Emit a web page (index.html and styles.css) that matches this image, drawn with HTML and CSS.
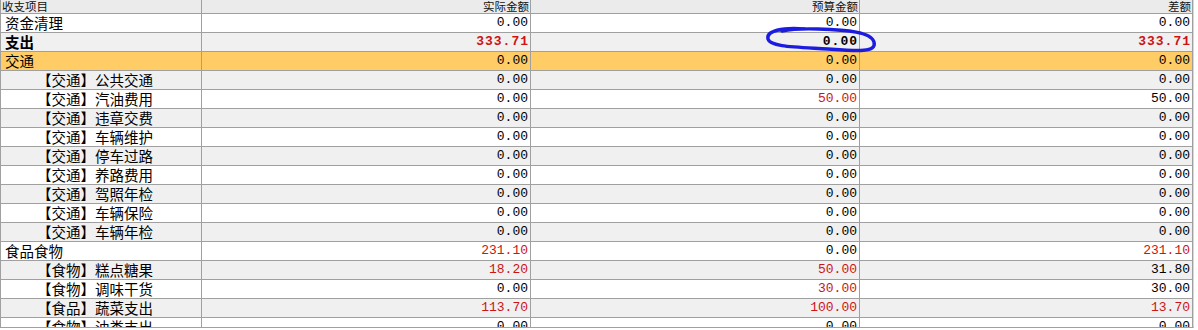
FILE: index.html
```html
<!DOCTYPE html>
<html lang="zh">
<head>
<meta charset="utf-8">
<title>收支</title>
<link rel="stylesheet" href="styles.css">
</head>
<body>
<div class="page">
  <div class="grid">
    <div class="row head">
      <div class="cell label">收支项目</div>
      <div class="cell num">实际金额</div>
      <div class="cell num">预算金额</div>
      <div class="cell num">差额</div>
    </div>
    <div class="row">
      <div class="cell label">资金清理</div>
      <div class="cell num">0.00</div><div class="cell num">0.00</div><div class="cell num">0.00</div>
    </div>
    <div class="row alt bold">
      <div class="cell label">支出</div>
      <div class="cell num red">333.71</div><div class="cell num">0.00</div><div class="cell num red">333.71</div>
    </div>
    <div class="row hl">
      <div class="cell label">交通</div>
      <div class="cell num">0.00</div><div class="cell num">0.00</div><div class="cell num">0.00</div>
    </div>
    <div class="row alt">
      <div class="cell label sub">【交通】公共交通</div>
      <div class="cell num">0.00</div><div class="cell num">0.00</div><div class="cell num">0.00</div>
    </div>
    <div class="row">
      <div class="cell label sub">【交通】汽油费用</div>
      <div class="cell num">0.00</div><div class="cell num red">50.00</div><div class="cell num">50.00</div>
    </div>
    <div class="row alt">
      <div class="cell label sub">【交通】违章交费</div>
      <div class="cell num">0.00</div><div class="cell num">0.00</div><div class="cell num">0.00</div>
    </div>
    <div class="row">
      <div class="cell label sub">【交通】车辆维护</div>
      <div class="cell num">0.00</div><div class="cell num">0.00</div><div class="cell num">0.00</div>
    </div>
    <div class="row alt">
      <div class="cell label sub">【交通】停车过路</div>
      <div class="cell num">0.00</div><div class="cell num">0.00</div><div class="cell num">0.00</div>
    </div>
    <div class="row">
      <div class="cell label sub">【交通】养路费用</div>
      <div class="cell num">0.00</div><div class="cell num">0.00</div><div class="cell num">0.00</div>
    </div>
    <div class="row alt">
      <div class="cell label sub">【交通】驾照年检</div>
      <div class="cell num">0.00</div><div class="cell num">0.00</div><div class="cell num">0.00</div>
    </div>
    <div class="row">
      <div class="cell label sub">【交通】车辆保险</div>
      <div class="cell num">0.00</div><div class="cell num">0.00</div><div class="cell num">0.00</div>
    </div>
    <div class="row alt">
      <div class="cell label sub">【交通】车辆年检</div>
      <div class="cell num">0.00</div><div class="cell num">0.00</div><div class="cell num">0.00</div>
    </div>
    <div class="row">
      <div class="cell label">食品食物</div>
      <div class="cell num red">231.10</div><div class="cell num">0.00</div><div class="cell num red">231.10</div>
    </div>
    <div class="row alt">
      <div class="cell label sub">【食物】糕点糖果</div>
      <div class="cell num red">18.20</div><div class="cell num red">50.00</div><div class="cell num">31.80</div>
    </div>
    <div class="row">
      <div class="cell label sub">【食物】调味干货</div>
      <div class="cell num">0.00</div><div class="cell num red">30.00</div><div class="cell num">30.00</div>
    </div>
    <div class="row alt">
      <div class="cell label sub">【食品】蔬菜支出</div>
      <div class="cell num red">113.70</div><div class="cell num red">100.00</div><div class="cell num red">13.70</div>
    </div>
    <div class="row">
      <div class="cell label sub">【食物】油类支出</div>
      <div class="cell num">0.00</div><div class="cell num">0.00</div><div class="cell num">0.00</div>
    </div>
  </div>
  <svg class="mark" viewBox="0 0 1198 330" width="1198" height="330">
    <path d="M 805 29 C 782 27, 766 31, 768 39 C 770 47, 795 47, 828 49 C 856 51, 877 53, 874 42 C 871 32, 848 30, 818 29 C 803 28.5, 792 29, 782 31" fill="none" stroke="#1c1ce0" stroke-width="3.4" stroke-linecap="round"/>
  </svg>
</div>
</body>
</html>
```

FILE: styles.css
```css
html, body {
  margin: 0;
  padding: 0;
  background: #ffffff;
}
.page {
  position: relative;
  width: 1198px;
  height: 330px;
  overflow: hidden;
}
.grid {
  width: 1194px;
  height: 328px;
  overflow: hidden;
  box-sizing: border-box;
  border-left: 1px solid #a0a0a0;
  border-bottom: 1px solid #a0a0a0;
  border-right: 1px solid #d8d8d8;
}
.row {
  display: grid;
  grid-template-columns: 201px 329px 329px 333px;
  height: 19px;
  box-sizing: border-box;
  border-bottom: 1px solid #a0a0a0;
  background: #ffffff;
  color: #000;
}
.row.alt { background: #f0f0f0; }
.row.hl { background: #ffcc66; }
.cell {
  box-sizing: border-box;
  border-right: 1px solid #a0a0a0;
  line-height: 18px;
  white-space: nowrap;
}
.label {
  font-family: "Noto Sans CJK SC", "Noto Sans", sans-serif;
  font-size: 14.5px;
  padding-left: 4px;
}
.label.sub { padding-left: 36px; }
.num {
  font-family: "Liberation Mono", "DejaVu Sans Mono", monospace;
  font-size: 13px;
  text-align: right;
  padding-right: 2px;
}
.red { color: #cc1414; }
.bold .label { font-weight: bold; }
.bold .num { font-weight: bold; letter-spacing: 1px; padding-right: 1px; }
.row.head {
  height: 14px;
  background: #ebebeb;
}
.row.head .cell {
  font-family: "Noto Sans CJK SC", "Noto Sans", sans-serif;
  font-size: 11.5px;
  line-height: 13px;
  color: #111;
}
.row.head .label { padding-left: 1px; }
.row.head .num { padding-right: 1px; }
.mark {
  position: absolute;
  left: 0;
  top: 0;
  pointer-events: none;
}
```
